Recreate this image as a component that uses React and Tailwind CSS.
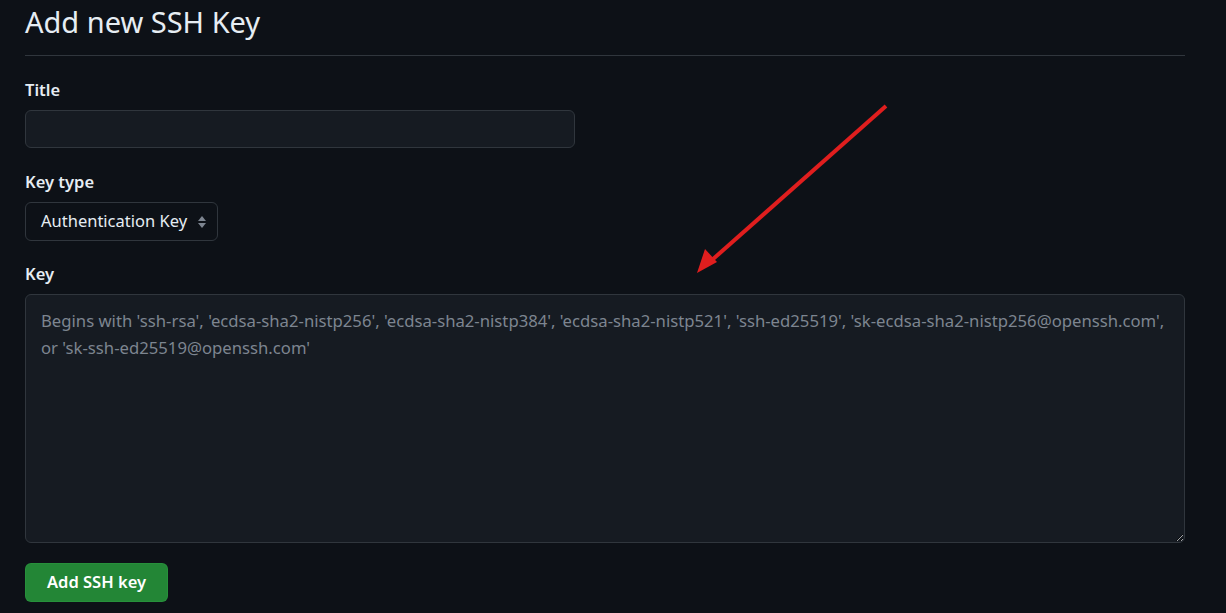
import React from 'react';

const fontStack = { fontFamily: '"Segoe UI", "Noto Sans", "Open Sans", sans-serif' };

const Arrow = () => (
  <svg className="absolute left-0 top-0 pointer-events-none" width="1226" height="613">
    <line x1="886" y1="106" x2="712" y2="260" stroke="#e01e1e" strokeWidth="4" />
    <polygon points="697,273 705,249 717,262" fill="#e01e1e" />
  </svg>
);

const SelectArrows = () => (
  <svg width="10" height="14" viewBox="0 0 10 14" className="ml-[10px]">
    <path d="M5 1 L9 6 L1 6 Z" fill="#7d8590" />
    <path d="M5 13 L9 8 L1 8 Z" fill="#7d8590" />
  </svg>
);

export default function App() {
  return (
    <div className="relative w-[1226px] h-[613px] overflow-hidden bg-[#0d1117] text-[#e6edf3]" style={fontStack}>
      <div className="w-[1160px] ml-[25px]">
        <h2 className="h-[56px] border-b border-[#30363d] text-[29px] leading-[42px] font-normal pt-[1px]">
          Add new SSH Key
        </h2>

        <label className="block mt-[22px] mb-2 text-[16.5px] leading-[24px] font-semibold">Title</label>
        <div className="w-[550px] h-[38px] rounded-md border border-[#30363d] bg-[#161b22]" />

        <label className="block mt-[22px] mb-2 text-[16.5px] leading-[24px] font-semibold">Key type</label>
        <div className="inline-flex items-center h-[39px] pl-[15px] pr-[10px] rounded-md border border-[#30363d] bg-[#0d1117] text-[16.5px]">
          <span>Authentication Key</span>
          <SelectArrows />
        </div>

        <label className="block mt-[21px] mb-2 text-[16.5px] leading-[24px] font-semibold">Key</label>
        <textarea
          className="block w-[1160px] h-[249px] rounded-md border border-[#30363d] bg-[#161b22] px-[15px] pt-[12px] text-[16.7px] leading-[27px] text-[#e6edf3] placeholder:text-[#7d8590] outline-none"
          style={fontStack}
          placeholder={"Begins with 'ssh-rsa', 'ecdsa-sha2-nistp256', 'ecdsa-sha2-nistp384', 'ecdsa-sha2-nistp521', 'ssh-ed25519', 'sk-ecdsa-sha2-nistp256@openssh.com',\nor 'sk-ssh-ed25519@openssh.com'"}
        />

        <button className="mt-[20px] h-[39px] px-[21px] rounded-md bg-[#238636] border border-[#2ea043]/40 text-white text-[16.5px] font-semibold">
          Add SSH key
        </button>
      </div>
      <Arrow />
    </div>
  );
}
